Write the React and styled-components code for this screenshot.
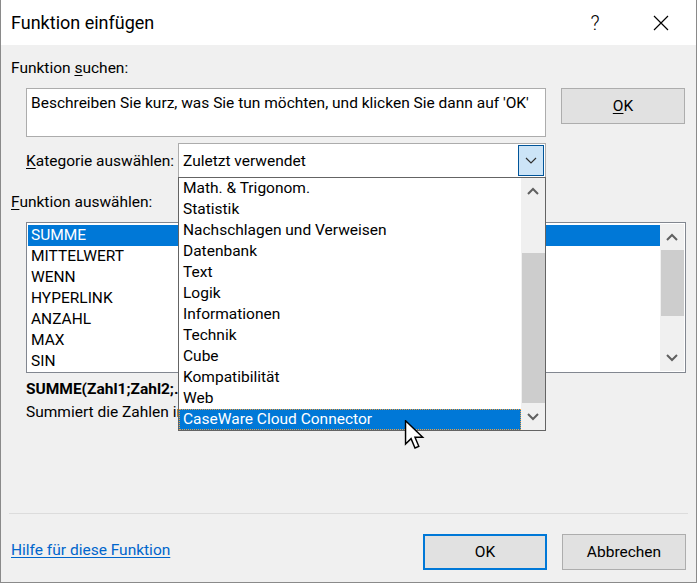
import React from 'react';
import styled, { createGlobalStyle } from 'styled-components';

const GlobalStyle = createGlobalStyle`
  html, body {
    margin: 0;
    padding: 0;
    background: #f0f0f0;
  }
  * {
    box-sizing: border-box;
  }
`;

const kategorien = [
  'Math. & Trigonom.',
  'Statistik',
  'Nachschlagen und Verweisen',
  'Datenbank',
  'Text',
  'Logik',
  'Informationen',
  'Technik',
  'Cube',
  'Kompatibilität',
  'Web',
  'CaseWare Cloud Connector'
];

const funktionen = ['SUMME', 'MITTELWERT', 'WENN', 'HYPERLINK', 'ANZAHL', 'MAX', 'SIN'];

const ChevronUp = () => (
  <svg width="12" height="8" viewBox="0 0 12 8">
    <path d="M1 7 L6 2 L11 7" fill="none" stroke="#606060" strokeWidth="2" />
  </svg>
);

const ChevronDown = ({ color = '#606060', width = 2 }) => (
  <svg width="12" height="8" viewBox="0 0 12 8">
    <path d="M1 1 L6 6 L11 1" fill="none" stroke={color} strokeWidth={width} />
  </svg>
);

const App = () => {
  return (
    <>
      <GlobalStyle />
      <Fenster>
        <TitleBar>
          <Title>Funktion einfügen</Title>
          <TitleButton breite={60}>?</TitleButton>
          <TitleButton breite={71}>
            <svg width="16" height="16" viewBox="0 0 16 16">
              <path d="M1 1 L15 15 M15 1 L1 15" stroke="#000" strokeWidth="1.2" />
            </svg>
          </TitleButton>
        </TitleBar>

        <Body>
          <Label>Funktion <u>s</u>uchen:</Label>
          <SuchRow>
            <SuchFeld>Beschreiben Sie kurz, was Sie tun möchten, und klicken Sie dann auf 'OK'</SuchFeld>
            <Button><u>O</u>K</Button>
          </SuchRow>

          <KategorieRow>
            <KategorieLabel><u>K</u>ategorie auswählen:</KategorieLabel>
            <Combo>
              <ComboText>Zuletzt verwendet</ComboText>
              <ComboButton>
                <ChevronDown color="#303030" width={1.2} />
              </ComboButton>
              <DropList>
                <DropItems>
                  {kategorien.map((k, i) => (
                    <DropItem key={k} aktiv={i === kategorien.length - 1}>{k}</DropItem>
                  ))}
                </DropItems>
                <Scrollbar>
                  <ScrollArrow><ChevronUp /></ScrollArrow>
                  <ScrollTrack>
                    <Thumb oben={49} hoehe={150} />
                  </ScrollTrack>
                  <ScrollArrow><ChevronDown /></ScrollArrow>
                </Scrollbar>
              </DropList>
              <Cursor viewBox="0 0 14 22" width="22" height="32">
                <path
                  d="M0.5 0.5 L0.5 16.5 L4.3 12.8 L7 19.2 L9.6 18.1 L7 11.9 L12.3 11.9 Z"
                  fill="#fff"
                  stroke="#000"
                  strokeWidth="1"
                  strokeLinejoin="miter"
                />
              </Cursor>
            </Combo>
          </KategorieRow>

          <FunktionLabel><u>F</u>unktion auswählen:</FunktionLabel>
          <FunktionListe>
            <ListItems>
              {funktionen.map((f, i) => (
                <ListItem key={f} aktiv={i === 0}>{f}</ListItem>
              ))}
            </ListItems>
            <Scrollbar>
              <ScrollArrow><ChevronUp /></ScrollArrow>
              <ScrollTrack>
                <Thumb oben={0} hoehe={66} />
              </ScrollTrack>
              <ScrollArrow><ChevronDown /></ScrollArrow>
            </Scrollbar>
          </FunktionListe>

          {/* der Rest wird von der offenen Kategorieliste verdeckt */}
          <Syntax>SUMME(Zahl1;Zahl2;...)</Syntax>
          <Beschreibung>Summiert die Zahlen in einem Zellbereich.</Beschreibung>

          <Spacer />
          <Trenner />
          <Footer>
            <HilfeLink href="#">Hilfe für diese Funktion</HilfeLink>
            <FooterButtons>
              <Button primaer>OK</Button>
              <Button>Abbrechen</Button>
            </FooterButtons>
          </Footer>
        </Body>
      </Fenster>
    </>
  );
};

const Fenster = styled.div`
  width: 697px;
  height: 583px;
  display: flex;
  flex-direction: column;
  border: 1px solid #8a8a8a;
  border-top: none;
  background: #f0f0f0;
  font-family: Roboto, "Noto Sans", sans-serif;
  color: #000;
  overflow: hidden;
`;

const TitleBar = styled.div`
  height: 45px;
  flex-shrink: 0;
  background: #fff;
  display: flex;
  align-items: center;
`;

const Title = styled.div`
  flex: 1;
  padding-left: 10px;
  font-size: 18px;
  padding-bottom: 1px;
`;

const TitleButton = styled.div`
  width: ${props => props.breite}px;
  height: 45px;
  display: flex;
  align-items: center;
  justify-content: center;
  font-size: 20px;
  font-weight: 300;
`;

const Body = styled.div`
  flex: 1;
  display: flex;
  flex-direction: column;
  padding: 13px 10px 12px 10px;
  font-size: 15.5px;
`;

const Label = styled.div`
  line-height: 20px;
  white-space: nowrap;

  u {
    text-decoration-thickness: 1px;
    text-underline-offset: 2px;
  }
`;

const KategorieLabel = styled(Label)`
  width: 152px;
  flex-shrink: 0;
`;

const FunktionLabel = styled(Label)`
  margin-top: 14px;
`;

const SuchRow = styled.div`
  display: flex;
  gap: 15px;
  margin-top: 10px;
  padding-left: 15px;
`;

const SuchFeld = styled.div`
  width: 520px;
  height: 49px;
  background: #fff;
  border: 1px solid #acacac;
  padding: 4px 4px;
  line-height: 20px;
  white-space: nowrap;
  overflow: hidden;
`;

const Button = styled.div`
  width: 124px;
  height: 36px;
  display: flex;
  align-items: center;
  justify-content: center;
  background: #e1e1e1;
  border: ${props => (props.primaer ? '2px solid #0078d7' : '1px solid #adadad')};

  u {
    text-decoration-thickness: 1px;
    text-underline-offset: 2px;
  }
`;

const KategorieRow = styled.div`
  display: flex;
  align-items: center;
  margin-top: 6px;
  padding-left: 15px;
`;

const Combo = styled.div`
  position: relative;
  width: 368px;
  height: 35px;
  background: #fff;
  border: 1px solid #acacac;
  display: flex;
  align-items: center;
  padding: 1px 1px 1px 4px;
`;

const ComboText = styled.div`
  flex: 1;
`;

const ComboButton = styled.div`
  width: 26px;
  height: 31px;
  background: #cce4f7;
  border: 1px solid #005499;
  display: flex;
  align-items: center;
  justify-content: center;
`;

const DropList = styled.div`
  position: absolute;
  top: 33px;
  left: -1px;
  width: 368px;
  height: 254px;
  background: #fff;
  border: 1px solid #646464;
  display: flex;
  z-index: 2;
`;

const DropItems = styled.div`
  flex: 1;
  display: flex;
  flex-direction: column;
`;

const DropItem = styled.div`
  height: 21px;
  line-height: 20px;
  padding-left: 4px;
  white-space: nowrap;
  background: ${props => (props.aktiv ? '#0078d7' : 'transparent')};
  color: ${props => (props.aktiv ? '#fff' : '#000')};
  outline: ${props => (props.aktiv ? '1px dotted #f0a040' : 'none')};
  outline-offset: -1px;
`;

const Scrollbar = styled.div`
  width: 24px;
  display: flex;
  flex-direction: column;
  background: #f0f0f0;
`;

const ScrollArrow = styled.div`
  height: 26px;
  display: flex;
  align-items: center;
  justify-content: center;
  flex-shrink: 0;
`;

const ScrollTrack = styled.div`
  flex: 1;
  position: relative;
`;

const Thumb = styled.div.attrs(props => ({
  style: { top: props.oben + 'px', height: props.hoehe + 'px' }
}))`
  position: absolute;
  left: 1px;
  right: 0;
  background: #cdcdcd;
`;

const Cursor = styled.svg`
  position: absolute;
  left: 225px;
  top: 276px;
  z-index: 3;
`;

const FunktionListe = styled.div`
  margin-top: 10px;
  margin-left: 15px;
  width: 660px;
  height: 151px;
  background: #fff;
  border: 1px solid #828790;
  padding: 1px;
  display: flex;
`;

const ListItems = styled.div`
  flex: 1;
  display: flex;
  flex-direction: column;
  padding-top: 1px;
`;

const ListItem = styled.div`
  height: 21px;
  line-height: 21px;
  padding-left: 3px;
  background: ${props => (props.aktiv ? '#0078d7' : 'transparent')};
  color: ${props => (props.aktiv ? '#fff' : '#000')};
`;

const Syntax = styled.div`
  margin-top: 6px;
  margin-left: 15px;
  width: 152px;
  overflow: hidden;
  white-space: nowrap;
  font-weight: bold;
  line-height: 21px;
`;

const Beschreibung = styled.div`
  margin-left: 15px;
  margin-top: 1px;
  width: 152px;
  overflow: hidden;
  white-space: nowrap;
  line-height: 22px;
`;

const Spacer = styled.div`
  flex: 1;
`;

const Trenner = styled.div`
  height: 1px;
  margin: 0 -2px;
  background: #dcdcdc;
`;

const Footer = styled.div`
  display: flex;
  align-items: center;
  justify-content: space-between;
  margin-top: 20px;
`;

const HilfeLink = styled.a`
  color: #0066cc;
  text-decoration: underline;
  text-underline-offset: 2px;
  margin-bottom: 4px;
`;

const FooterButtons = styled.div`
  display: flex;
  gap: 15px;
`;

export default App;
